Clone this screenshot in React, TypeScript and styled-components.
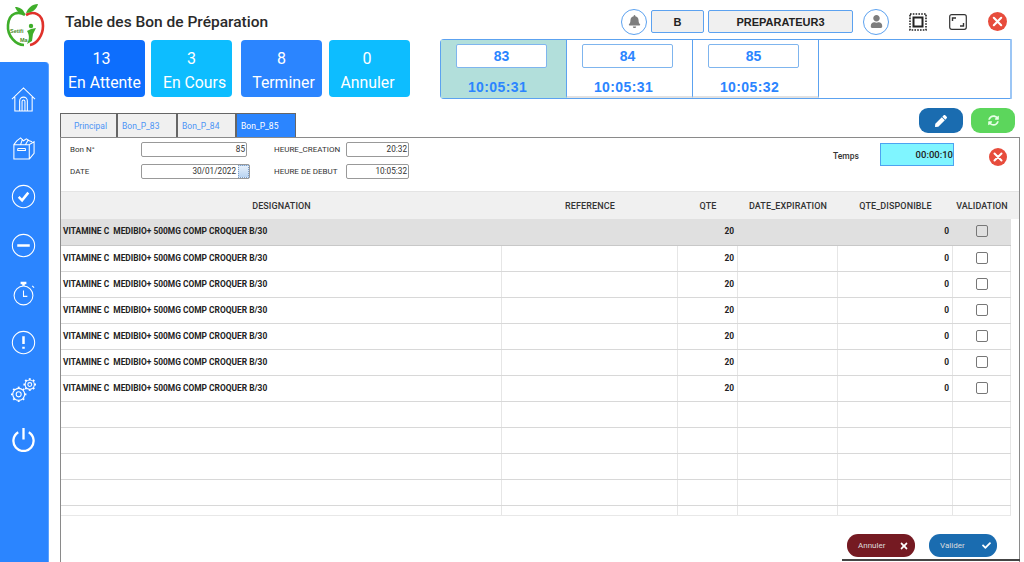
import React from 'react'
import styled, { createGlobalStyle } from 'styled-components'
import { FaBell, FaUser, FaPen, FaSyncAlt, FaTimes, FaCheck } from 'react-icons/fa'

const GlobalStyle = createGlobalStyle`
  html, body {
    margin: 0;
    padding: 0;
    background: #fff;
  }
  * {
    box-sizing: border-box;
  }
`

const stats = [
  { value: 13, label: 'En Attente', color: '#0d6efd', gap: 0, nudge: 6, shift: 0 },
  { value: 3, label: 'En Cours', color: '#0dbdff', gap: 6, nudge: 0, shift: 3 },
  { value: 8, label: 'Terminer', color: '#2b85ff', gap: 9, nudge: 0, shift: 2 },
  { value: 0, label: 'Annuler', color: '#0dbdff', gap: 7, nudge: 5, shift: -2 },
]

const timers = [
  { bon: 83, time: '10:05:31', active: true },
  { bon: 84, time: '10:05:31', active: false },
  { bon: 85, time: '10:05:32', active: false },
]

const tabs = [
  { name: 'Principal', width: 57, pad: 13 },
  { name: 'Bon_P_83', width: 60, pad: 4 },
  { name: 'Bon_P_84', width: 59, pad: 4 },
  { name: 'Bon_P_85', width: 60, pad: 4 },
]

const columns = '441px 176px 60px 100px 115px 58px'

export default function App(): JSX.Element {
  return (
    <Page>
      <GlobalStyle />
      <Side>
        <Logo />
        <Nav>
          <HomeIcon />
          <BoxIcon />
          <CheckIcon />
          <MinusIcon />
          <TimerIcon />
          <AlertIcon />
          <GearsIcon />
          <PowerIcon />
        </Nav>
      </Side>
      <Main>
        <Header>
          <Title>Table des Bon de Préparation</Title>
          <RoundIcon gap={4}>
            <FaBell size={13} color='#7d7d7d' />
          </RoundIcon>
          <InfoBox width={53} gap={4}>
            B
          </InfoBox>
          <InfoBox width={145} gap={10}>
            PREPARATEUR3
          </InfoBox>
          <RoundIcon gap={20}>
            <FaUser size={13} color='#7d7d7d' />
          </RoundIcon>
          <FrameIcon />
          <ExpandIcon />
          <CloseCircle size={19} />
        </Header>

        <TopRow>
          <Stats>
            {stats.map(s => (
              <Stat key={s.label} color={s.color} gap={s.gap} nudge={s.nudge} shift={s.shift}>
                <b>{s.value}</b>
                <span>{s.label}</span>
              </Stat>
            ))}
          </Stats>
          <Timers>
            {timers.map(t => (
              <Timer key={t.bon} active={t.active}>
                <BonBox>{t.bon}</BonBox>
                <Clock>{t.time}</Clock>
              </Timer>
            ))}
          </Timers>
        </TopRow>

        <TabRow>
          <Tabs>
            {tabs.map((t, i) => (
              <Tab key={t.name} active={i === tabs.length - 1} width={t.width} pad={t.pad}>
                {t.name}
              </Tab>
            ))}
          </Tabs>
          <Actions>
            <ActionButton color='#1a6cb0'>
              <FaPen size={12} color='#fff' />
            </ActionButton>
            <ActionButton color='#5cd65c'>
              <FaSyncAlt size={11} color='#e6ffe6' />
            </ActionButton>
          </Actions>
        </TabRow>

        <Panel>
          <Form>
            <FormGrid>
              <Label>Bon N°</Label>
              <Field>85</Field>
              <Label>HEURE_CREATION</Label>
              <Field>20:32</Field>
              <Label>DATE</Label>
              <DateWrap>
                <DateField>30/01/2022</DateField>
                <DateSpin />
              </DateWrap>
              <Label>HEURE DE DEBUT</Label>
              <Field>10:05:32</Field>
            </FormGrid>
            <TempsLabel>Temps</TempsLabel>
            <TempsField>00:00:10</TempsField>
            <CloseSlot>
              <CloseCircle size={18} />
            </CloseSlot>
          </Form>

          <TableHead>
            <span>DESIGNATION</span>
            <span>REFERENCE</span>
            <span>QTE</span>
            <span>DATE_EXPIRATION</span>
            <span>QTE_DISPONIBLE</span>
            <span>VALIDATION</span>
          </TableHead>

          {Array.from({ length: 7 }).map((_, i) => (
            <Row key={i} selected={i === 0}>
              <NameCell>VITAMINE C&nbsp; MEDIBIO+ 500MG COMP CROQUER B/30</NameCell>
              <Cell />
              <NumCell>20</NumCell>
              <Cell />
              <NumCell>0</NumCell>
              <CheckCell>
                <CheckBox type='checkbox' readOnly />
              </CheckCell>
            </Row>
          ))}
          {Array.from({ length: 4 }).map((_, i) => (
            <Row key={i}>
              <Cell />
              <Cell />
              <Cell />
              <Cell />
              <Cell />
              <Cell />
            </Row>
          ))}
          <LastRow>
            <Cell />
            <Cell />
            <Cell />
            <Cell />
            <Cell />
            <Cell />
          </LastRow>

          <Footer>
            <FootButton color='#751a22'>
              Annuler
              <FaTimes size={10} color='#fff' />
            </FootButton>
            <FootButton color='#1a6cb0'>
              Valider
              <FaCheck size={9} color='#fff' />
            </FootButton>
          </Footer>
        </Panel>
      </Main>
    </Page>
  )
}

// Drawn icons
function Logo() {
  return (
    <LogoSvg viewBox='0 0 40 44'>
      <path d='M20 12C14 8 4 9 3 22c-1 11 8 20 16 20' fill='none' stroke='#3fae2a' strokeWidth='2.6' />
      <path d='M21 12c7-4 17-2 17 11 0 9-6 18-13 19' fill='none' stroke='#e0322b' strokeWidth='2.6' />
      <path d='M20 11C18 6 15 4 10 4c2 5 5 7 10 7z' fill='#3fae2a' />
      <path d='M21 10c2-5 6-9 12-9-1 5-6 9-12 9z' fill='#3fae2a' />
      <circle cx='26' cy='23' r='2.2' fill='#3fae2a' />
      <path d='M22 28l4-2 5-1-3 6-1 7-5 3c2-4 3-8 0-13z' fill='#3fae2a' />
      <LogoText x='5' y='30' fill='#4a8a2a'>Setifi</LogoText>
      <LogoText x='15' y='39' fill='#4a8a2a'>Ma</LogoText>
    </LogoSvg>
  )
}

function HomeIcon() {
  return (
    <NavSvg viewBox='0 0 26 26'>
      <path d='M1 12.5L13 1l12 11.5M4 10.5V25h18V10.5M9 25V14.5a4 4 0 0 1 8 0V25M11.5 25V15a1.5 1.5 0 0 1 3 0v10' />
    </NavSvg>
  )
}

function BoxIcon() {
  return (
    <NavSvg viewBox='0 0 26 26'>
      <path d='M3 9h16v15H3zM19 9l5-3v12l-5 6M3 9l3-4 4-3 3 3 3-2 3 2 3 1M7 13h8M7 13v2h8v-2M10 9l2-6M15 9l3-5' />
    </NavSvg>
  )
}

function CheckIcon() {
  return (
    <NavSvg viewBox='0 0 26 26'>
      <circle cx='13' cy='13' r='11.6' />
      <BoldPath d='M8 13.5l3.5 3.5 6.5-8' />
    </NavSvg>
  )
}

function MinusIcon() {
  return (
    <NavSvg viewBox='0 0 26 26'>
      <circle cx='13' cy='13' r='11.6' />
      <BoldPath d='M6.5 13h13' />
    </NavSvg>
  )
}

function TimerIcon() {
  return (
    <NavSvg viewBox='0 0 26 26'>
      <circle cx='13' cy='15' r='9.8' />
      <BoldPath d='M10 2h6M13 2v3' />
      <path d='M13 10v6h4M22 5l2 2' />
    </NavSvg>
  )
}

function AlertIcon() {
  return (
    <NavSvg viewBox='0 0 26 26'>
      <circle cx='13' cy='13' r='11.6' />
      <BoldPath d='M13 6.5v8M13 17.5v2' />
    </NavSvg>
  )
}

function Gear({ cx, cy, r }: { cx: number; cy: number; r: number }) {
  const teeth = Array.from({ length: 8 }).map((_, i) => {
    const a = (i * Math.PI) / 4
    return (
      <line
        key={i}
        x1={cx + Math.cos(a) * r}
        y1={cy + Math.sin(a) * r}
        x2={cx + Math.cos(a) * (r + 1.8)}
        y2={cy + Math.sin(a) * (r + 1.8)}
        strokeWidth={2}
      />
    )
  })
  return (
    <g>
      <circle cx={cx} cy={cy} r={r} />
      <circle cx={cx} cy={cy} r={r * 0.42} />
      {teeth}
    </g>
  )
}

function GearsIcon() {
  return (
    <NavSvg viewBox='0 0 26 26'>
      <Gear cx={8} cy={17} r={6.2} />
      <Gear cx={19.5} cy={6.8} r={4.8} />
    </NavSvg>
  )
}

function PowerIcon() {
  return (
    <NavSvg viewBox='0 0 26 26'>
      <ThickPath d='M13 1v12M7.5 5.5a10.5 10.5 0 1 0 11 0' />
    </NavSvg>
  )
}

function FrameIcon() {
  return (
    <ToolSvg viewBox='0 0 18 18'>
      <rect x='1' y='1' width='16' height='16' fill='none' stroke='#222' strokeWidth='1.6' strokeDasharray='1.6 1.2' />
      <rect x='4.5' y='4.5' width='9' height='9' fill='none' stroke='#222' strokeWidth='2' />
    </ToolSvg>
  )
}

function ExpandIcon() {
  return (
    <ExpandSvg viewBox='0 0 18 16'>
      <rect x='0.7' y='0.7' width='16.6' height='14.6' rx='2' fill='none' stroke='#333' strokeWidth='1.2' />
      <path d='M3.5 7V4h3.5M14.5 9v3H11' fill='none' stroke='#333' strokeWidth='1.4' />
    </ExpandSvg>
  )
}

function CloseCircle({ size }: { size: number }) {
  return (
    <CloseSvg width={size} height={size} viewBox='0 0 18 18'>
      <circle cx='9' cy='9' r='9' fill='#e74c3c' />
      <path d='M5.5 5.5l7 7M12.5 5.5l-7 7' stroke='#fff' strokeWidth='2' strokeLinecap='round' />
    </CloseSvg>
  )
}

const Page = styled.div`
  width: 1024px;
  height: 562px;
  display: flex;
  overflow: hidden;
  background: #fff;
  font-family: Roboto, 'Liberation Sans', sans-serif;
`
const Side = styled.aside`
  width: 49px;
  flex: none;
  display: flex;
  flex-direction: column;
`
const LogoSvg = styled.svg`
  width: 40px;
  height: 44px;
  margin: 3px 0 15px 5px;
  flex: none;
`
const LogoText = styled.text`
  font-family: 'Liberation Sans', sans-serif;
  font-size: 5.5px;
  font-weight: 700;
`
const Nav = styled.nav`
  flex: 1;
  background: #2b85ff;
  border-right: 1px solid #5ca2ff;
  border-top-right-radius: 4px;
  display: flex;
  flex-direction: column;
  align-items: center;
  gap: 23.5px;
  padding-top: 25px;
`
const NavSvg = styled.svg`
  width: 25px;
  height: 25px;
  fill: none;
  stroke: #fff;
  stroke-width: 1.1;
  margin-left: -1px;
`
const BoldPath = styled.path`
  stroke-width: 2.6;
`
const ThickPath = styled.path`
  stroke-width: 2.4;
`
const Main = styled.main`
  flex: 1;
  min-width: 0;
  display: flex;
  flex-direction: column;
`
const Header = styled.header`
  height: 39px;
  flex: none;
  display: flex;
  align-items: center;
  padding: 4px 17px 0 16px;
`
const Title = styled.h1`
  margin: 0 auto 0 0;
  font-size: 15.5px;
  font-weight: 500;
  color: #2a2a2a;
`
const RoundIcon = styled.div<{ gap: number }>`
  width: 26px;
  height: 26px;
  border-radius: 50%;
  border: 1px solid #5ca2f0;
  display: flex;
  align-items: center;
  justify-content: center;
  margin-right: ${p => p.gap}px;
`
const InfoBox = styled.div<{ width: number; gap: number }>`
  width: ${p => p.width}px;
  height: 23px;
  margin-right: ${p => p.gap}px;
  background: #f0f0f0;
  border: 1px solid #5ca2f0;
  border-radius: 2px;
  display: flex;
  align-items: center;
  justify-content: center;
  font: 700 11px 'Liberation Sans', sans-serif;
  color: #222;
`
const ToolSvg = styled.svg`
  width: 18px;
  height: 18px;
`
const ExpandSvg = styled(ToolSvg)`
  margin-left: 22px;
`
const CloseSvg = styled.svg`
  display: block;
  margin-left: 21px;
`
const TopRow = styled.div`
  height: 60px;
  flex: none;
  display: flex;
  padding-left: 15px;
`
const Stats = styled.div`
  display: flex;
  padding-top: 1px;
  width: 376px;
  flex: none;
`
const Stat = styled.div<{ color: string; gap: number; nudge: number; shift: number }>`
  width: 81px;
  height: 57px;
  margin-left: ${p => p.gap}px;
  border-radius: 4px;
  background: ${p => p.color};
  color: #fff;
  display: flex;
  flex-direction: column;
  align-items: center;
  padding-top: 9px;
  white-space: nowrap;

  b {
    font-size: 16px;
    font-weight: 400;
    line-height: 19px;
    padding-right: ${p => p.nudge}px;
  }
  span {
    font-size: 15.8px;
    line-height: 18px;
    margin-top: 6px;
    transform: translateX(${p => p.shift}px);
  }
`
const Timers = styled.div`
  width: 572px;
  height: 60px;
  flex: none;
  display: flex;
  border: 1px solid #5ca2f0;
  border-radius: 4px 0 0 4px;
  border-right: 2px solid #9cc6f5;
`
const Timer = styled.div<{ active: boolean }>`
  width: 126px;
  border-right: 1px solid #5ca2f0;
  background: ${p => (p.active ? '#b2dfdb' : '#fff')};
  border-bottom: 2px solid ${p => (p.active ? '#b2dfdb' : '#e2e2e2')};
  display: flex;
  flex-direction: column;
  align-items: center;
  padding: 4px 4px 0 0;
`
const BonBox = styled.div`
  width: 91px;
  height: 24px;
  background: #fff;
  border: 1px solid #7fb5ee;
  border-radius: 2px;
  display: flex;
  align-items: center;
  justify-content: center;
  font: 700 14px 'Liberation Sans', sans-serif;
  color: #2b85ff;
`
const Clock = styled.div`
  margin-top: 11px;
  margin-right: 8px;
  font: 700 14px/16px 'Liberation Sans', sans-serif;
  color: #2b85ff;
  letter-spacing: 0.4px;
`
const TabRow = styled.div`
  height: 38px;
  flex: none;
  display: flex;
  align-items: flex-end;
  padding-left: 11px;
`
const Tabs = styled.div`
  display: flex;
  margin-right: auto;
`
const Tab = styled.div<{ active: boolean; width: number; pad: number }>`
  width: ${p => p.width}px;
  height: 24px;
  padding-left: ${p => p.pad}px;
  border: 1px solid #666;
  border-bottom: none;
  background: ${p => (p.active ? '#2b85ff' : '#f0f0f0')};
  color: ${p => (p.active ? '#fff' : '#4d94f5')};
  font: 400 8.5px/24px Roboto, sans-serif;
  white-space: nowrap;
`
const Actions = styled.div`
  display: flex;
  gap: 8px;
  margin-right: 9px;
  margin-bottom: 4px;
`
const ActionButton = styled.button<{ color: string }>`
  width: 44px;
  height: 25px;
  border: none;
  border-radius: 9px;
  padding: 0;
  background: ${p => p.color};
  display: flex;
  align-items: center;
  justify-content: center;
`
const Panel = styled.section`
  position: relative;
  flex: 1;
  margin: 0 4px 0 11px;
  border-top: 1px solid #8a8a8a;
  border-left: 1px solid #8a8a8a;
  border-right: 1px solid #8a8a8a;
`
const Form = styled.div`
  height: 53px;
  display: flex;
  align-items: flex-start;
`
const FormGrid = styled.div`
  display: grid;
  grid-template-columns: 71px 106px 99px 63px;
  grid-auto-rows: 15px;
  row-gap: 7px;
  width: 772px;
  padding: 4px 0 0 9px;
  align-items: center;
  flex: none;
`
const Label = styled.div`
  font: 400 8px Roboto, sans-serif;
  color: #333;
  white-space: nowrap;

  &:nth-child(4n + 3) {
    padding-left: 27px;
  }
`
const Field = styled.div`
  height: 15px;
  background: #fff;
  border: 1px solid #999;
  border-radius: 2px;
  text-align: right;
  padding-right: 1px;
  font: 400 8.2px/13px Roboto, sans-serif;
  color: #333;
`
const DateField = styled(Field)`
  padding-right: 13px;
`
const DateWrap = styled.div`
  position: relative;
  width: 109px;
`
const DateSpin = styled.div`
  position: absolute;
  top: 1px;
  right: 1px;
  width: 11px;
  height: 13px;
  background: linear-gradient(#e6f0fb, #b9d4f2);
  border: 1px dotted #7d9fc9;
`
const TempsLabel = styled.div`
  font: 500 8.5px Roboto, sans-serif;
  color: #333;
  margin-top: 13px;
  width: 47px;
`
const TempsField = styled.div`
  width: 74px;
  height: 23px;
  margin-top: 5px;
  background: #7ff5ff;
  border: 1px solid #4da3f0;
  text-align: right;
  font: 500 9.5px/21px Roboto, sans-serif;
  color: #222;
`
const CloseSlot = styled.div`
  margin-top: 10px;
  margin-left: 14px;
`
const TableHead = styled.div`
  display: grid;
  grid-template-columns: ${columns};
  height: 28px;
  background: #f0f0f0;
  border-top: 1px solid #e4e4e4;
  align-items: center;
  text-align: center;
  font: 500 9px Roboto, sans-serif;
  letter-spacing: 0.1px;
  color: #333;
`
const Cell = styled.div`
  border-right: 1px solid #e6e6e6;
`
const NameCell = styled(Cell)`
  padding-left: 2px;
  font: 700 8.4px/24px Roboto, 'Liberation Sans', sans-serif;
  color: #222;
  white-space: nowrap;
`
const NumCell = styled(Cell)`
  padding-right: 3px;
  text-align: right;
  font: 700 8.4px/24px Roboto, 'Liberation Sans', sans-serif;
  color: #222;
`
const CheckCell = styled(Cell)`
  display: flex;
  align-items: center;
  justify-content: center;
  padding-bottom: 2px;
`
const Row = styled.div<{ selected?: boolean }>`
  display: grid;
  grid-template-columns: ${columns};
  width: 950px;
  height: ${p => (p.selected ? 27 : 26)}px;
  background: ${p => (p.selected ? '#e0e0e0' : '#fff')};
  border-bottom: 1px solid ${p => (p.selected ? '#c8c8c8' : '#d8d8d8')};

  ${Cell} {
    border-right-color: ${p => (p.selected ? 'transparent' : '#e6e6e6')};
  }
  ${NameCell}, ${NumCell} {
    line-height: ${p => (p.selected ? 25 : 24)}px;
  }
`
const LastRow = styled(Row)`
  height: 10px;
  border-bottom: 1px solid #e8e8e8;
`
const CheckBox = styled.input`
  appearance: none;
  width: 12px;
  height: 12px;
  margin: 0 0 0 1px;
  background: transparent;
  border: 1px solid #777;
  border-radius: 2px;
`
const Footer = styled.div`
  position: absolute;
  right: -1px;
  bottom: 1px;
  width: 178px;
  height: 44px;
  padding: 17px 22px 0 5px;
  display: flex;
  gap: 14px;
  border-bottom: 2px solid #444;
`
const FootButton = styled.button<{ color: string }>`
  width: 68px;
  height: 23px;
  border: none;
  border-radius: 11px;
  background: ${p => p.color};
  color: #ddd;
  font: 400 8px Roboto, sans-serif;
  display: flex;
  align-items: center;
  justify-content: space-between;
  padding: 0 6px 0 11px;
`
